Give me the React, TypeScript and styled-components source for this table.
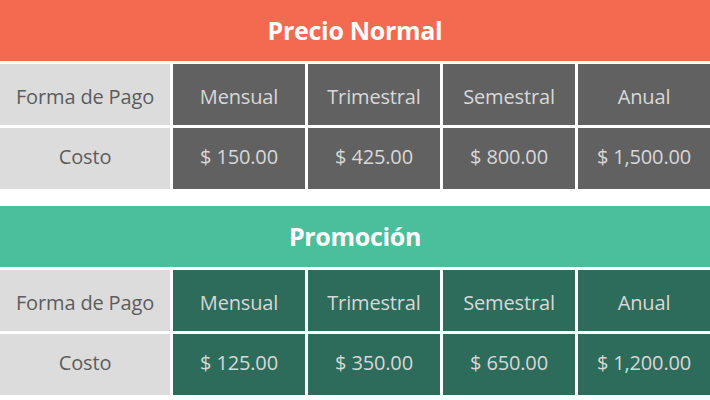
import React from "react";
import styled, { createGlobalStyle } from "styled-components";

const Global = createGlobalStyle`
  html, body { margin: 0; padding: 0; background: #ffffff; }
  body { font-family: "Open Sans", "Liberation Sans", sans-serif; }
`;

const Page = styled.div`
  width: 710px;
  display: flex;
  flex-direction: column;
  gap: 17px;
`;

const Table = styled.section`
  display: grid;
  grid-template-columns: 170px repeat(4, 1fr);
  grid-auto-rows: 61px;
  gap: 3px;
`;

const Title = styled.h2<{ $bg: string }>`
  grid-column: 1 / -1;
  margin: 0;
  background: ${(p) => p.$bg};
  color: #ffffff;
  font-size: 25px;
  font-weight: 700;
  letter-spacing: -0.3px;
  display: flex;
  align-items: center;
  justify-content: center;
  padding-bottom: 2px;
  box-sizing: border-box;
`;

const Cell = styled.div<{ $bg: string; $fg: string; $shift: number }>`
  background: ${(p) => p.$bg};
  color: ${(p) => p.$fg};
  font-size: 20px;
  letter-spacing: -0.15px;
  display: flex;
  align-items: center;
  justify-content: center;
  box-sizing: border-box;
  padding-top: ${(p) => (p.$shift > 0 ? p.$shift * 2 : 0)}px;
  padding-bottom: ${(p) => (p.$shift < 0 ? -p.$shift * 2 : 0)}px;
`;

type Props = {
  title: string;
  titleBg: string;
  cellBg: string;
  prices: string[];
};

const periods = ["Mensual", "Trimestral", "Semestral", "Anual"];

function PriceTable({ title, titleBg, cellBg, prices }: Props) {
  return (
    <Table>
      <Title $bg={titleBg}>{title}</Title>
      <Cell $bg="#dcdcdc" $fg="#5c5c5c" $shift={2}>Forma de Pago</Cell>
      {periods.map((p) => (
        <Cell key={p} $bg={cellBg} $fg="#d8d8d8" $shift={2}>{p}</Cell>
      ))}
      <Cell $bg="#dcdcdc" $fg="#5c5c5c" $shift={-2.5}>Costo</Cell>
      {prices.map((p) => (
        <Cell key={p} $bg={cellBg} $fg="#d8d8d8" $shift={-2.5}>{p}</Cell>
      ))}
    </Table>
  );
}

export default function App() {
  return (
    <>
      <Global />
      <Page>
        <PriceTable
          title="Precio Normal"
          titleBg="#f36a51"
          cellBg="#616161"
          prices={["$ 150.00", "$ 425.00", "$ 800.00", "$ 1,500.00"]}
        />
        <PriceTable
          title="Promoción"
          titleBg="#4bbf9b"
          cellBg="#2d6b5a"
          prices={["$ 125.00", "$ 350.00", "$ 650.00", "$ 1,200.00"]}
        />
      </Page>
    </>
  );
}
